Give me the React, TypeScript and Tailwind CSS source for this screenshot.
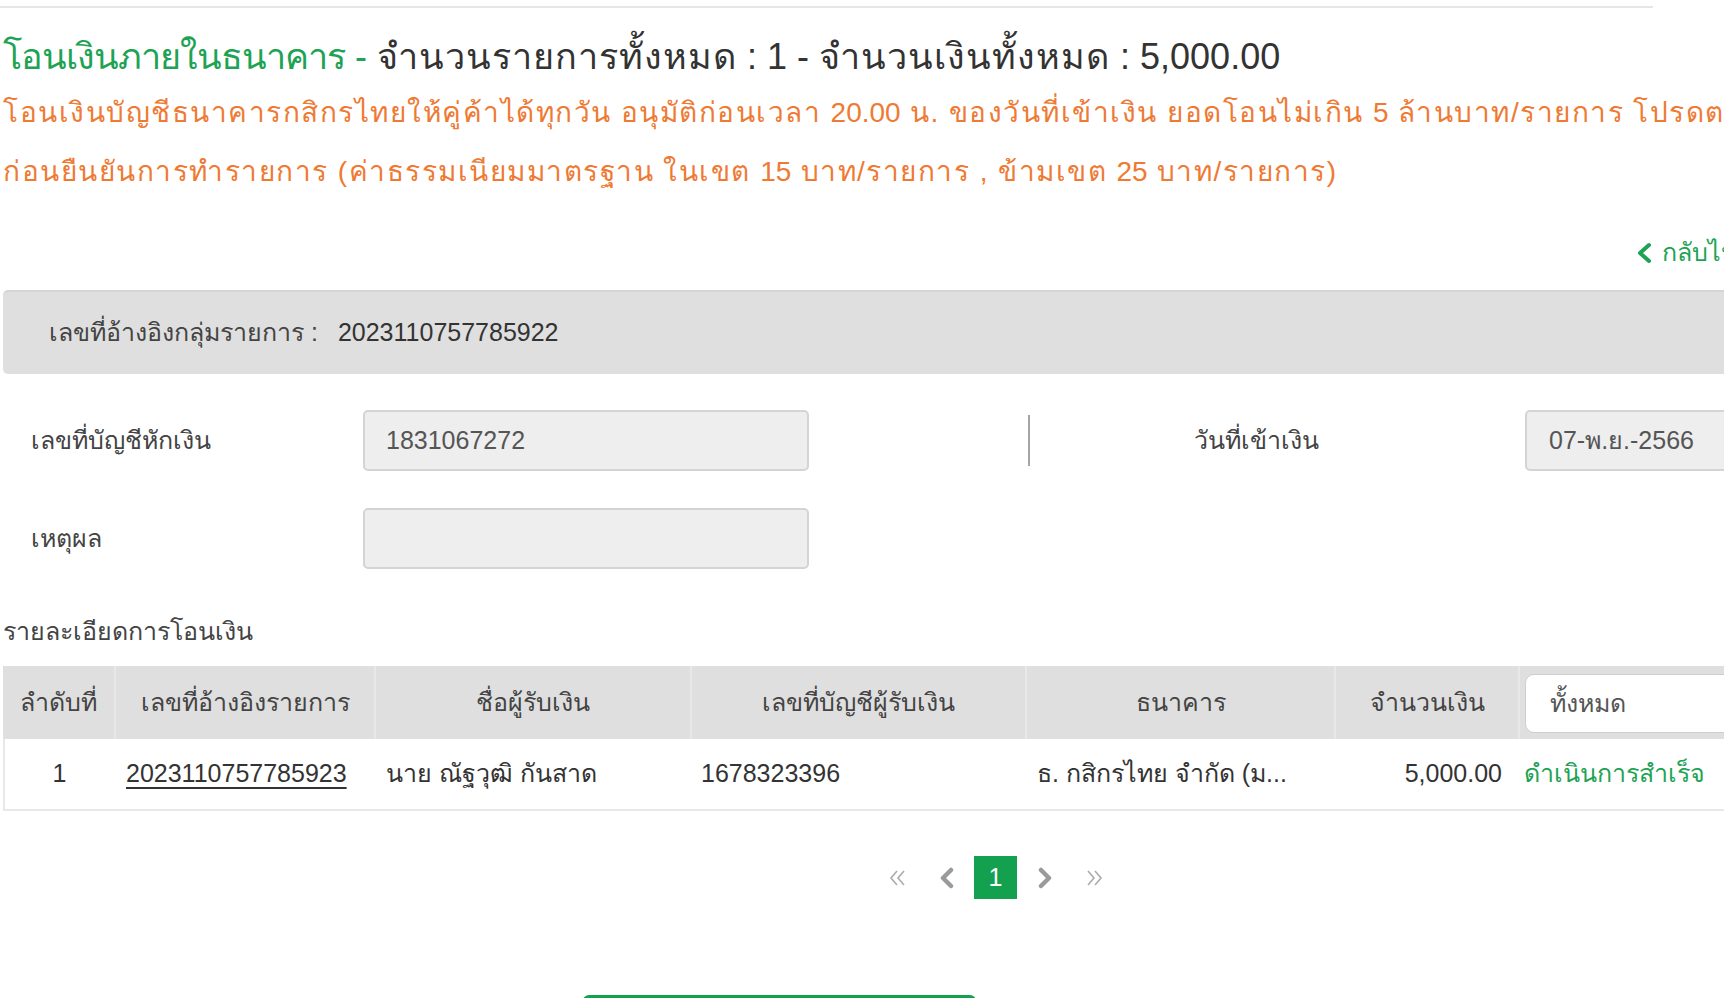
import React from "react";

const font = { fontFamily: '"Liberation Sans", "Noto Sans", Arial, sans-serif' };

function ChevronLeft() {
  return (
    <svg width="16" height="22" viewBox="0 0 16 22">
      <polyline points="12,3 4,11 12,19" fill="none" stroke="#9a9a9a" strokeWidth="4.5" strokeLinecap="round" strokeLinejoin="round" />
    </svg>
  );
}
function ChevronRight() {
  return (
    <svg width="16" height="22" viewBox="0 0 16 22">
      <polyline points="4,3 12,11 4,19" fill="none" stroke="#9a9a9a" strokeWidth="4.5" strokeLinecap="round" strokeLinejoin="round" />
    </svg>
  );
}
function DoubleLeft() {
  return (
    <svg width="20" height="22" viewBox="0 0 20 22">
      <polyline points="9,4 3,11 9,18" fill="none" stroke="#ababab" strokeWidth="1.6" />
      <polyline points="16,4 10,11 16,18" fill="none" stroke="#ababab" strokeWidth="1.6" />
    </svg>
  );
}
function DoubleRight() {
  return (
    <svg width="20" height="22" viewBox="0 0 20 22">
      <polyline points="4,4 10,11 4,18" fill="none" stroke="#ababab" strokeWidth="1.6" />
      <polyline points="11,4 17,11 11,18" fill="none" stroke="#ababab" strokeWidth="1.6" />
    </svg>
  );
}

function T({ children }: { children: React.ReactNode }) {
  return <span className="tracking-[1.5px]">{children}</span>;
}
function TT({ children }: { children: React.ReactNode }) {
  return <span className="tracking-[1px]">{children}</span>;
}

export default function App() {
  return (
    <div className="h-[998px] w-full overflow-hidden bg-white text-[#444]" style={font}>
      <div className="w-[1990px]">
        <div className="mt-[6px] h-[2px] w-[1653px] bg-[#e6e6e6]" />

        {/* Title */}
        <div className="mt-[25px] pl-[3px] text-[36px] leading-[48px] whitespace-nowrap text-[#333]">
          <span className="text-[#1ea355]">
            <span className="tracking-[-1px]">โอนเงินภายในธนาคาร</span> -{" "}
          </span>
          <TT>จำนวนรายการทั้งหมด</TT> : 1 - <TT>จำนวนเงินทั้งหมด</TT> : 5,000.00
        </div>

        {/* Notice */}
        <div className="mt-[2px] pl-[3px] text-[28px] leading-[59px] whitespace-nowrap text-[#ee7a34]">
          <div>
            <T>โอนเงินบัญชีธนาคารกสิกรไทยให้คู่ค้าได้ทุกวัน อนุมัติก่อนเวลา </T>20.00<T> น. ของวันที่เข้าเงิน ยอดโอนไม่เกิน </T>5<T> ล้านบาท/รายการ โปรดตรวจสอบข้อมูล</T>
          </div>
          <div>
            <T>ก่อนยืนยันการทำรายการ (ค่าธรรมเนียมมาตรฐาน ในเขต </T>15<T> บาท/รายการ , ข้ามเขต </T>25<T> บาท/รายการ)</T>
          </div>
        </div>

        {/* Back link */}
        <div className="mt-[34px] flex w-[1886px] justify-end">
          <div className="flex h-[36px] w-[250px] items-center gap-[10px] text-[25px] text-[#1ea355]">
            <svg width="16" height="22" viewBox="0 0 16 22">
              <polyline points="13,3 4,11 13,19" fill="none" stroke="#1ea355" strokeWidth="4" strokeLinejoin="round" strokeLinecap="round" />
            </svg>
            <span>กลับไปหน้าหลัก</span>
          </div>
        </div>

        {/* Group reference box */}
        <div className="ml-[3px] mt-[19px] flex h-[84px] w-[1960px] items-center rounded-[5px] border-t-2 border-[#d6d6d6] bg-[#dfdfdf] pl-[46px] text-[25px] text-[#333]">
          <span className="text-[#444]">เลขที่อ้างอิงกลุ่มรายการ :</span>
          <span className="ml-[20px]">2023110757785922</span>
        </div>

        {/* Row 1 */}
        <div className="mt-[36px] flex items-center pl-[31px] text-[25px]">
          <div className="w-[332px]">เลขที่บัญชีหักเงิน</div>
          <div className="flex h-[61px] w-[446px] items-center rounded-[5px] border-2 border-[#d4d4d4] bg-[#eeeeee] pl-[21px] text-[#555]">
            1831067272
          </div>
          <div className="ml-[219px] h-[51px] w-[2px] bg-[#a5a5a5]" />
          <div className="w-[452px] text-center">วันที่เข้าเงิน</div>
          <div className="ml-[43px] flex h-[61px] w-[320px] items-center rounded-[5px] border-2 border-[#d4d4d4] bg-[#eeeeee] pl-[22px] text-[#555]">
            07-พ.ย.-2566
          </div>
        </div>

        {/* Row 2 */}
        <div className="mt-[37px] flex items-center pl-[31px] text-[25px]">
          <div className="w-[332px]">เหตุผล</div>
          <div className="h-[61px] w-[446px] rounded-[5px] border-2 border-[#d4d4d4] bg-[#eeeeee]" />
        </div>

        {/* Section title */}
        <div className="mt-[44px] pl-[3px] text-[25px] leading-[36px]">รายละเอียดการโอนเงิน</div>

        {/* Table */}
        <div className="ml-[3px] mt-[17px] w-[1900px] text-[25px]">
          <div className="flex h-[73px] items-center bg-[#dfdfdf] text-[#444]">
            <div className="w-[111px] text-center">ลำดับที่</div>
            <div className="flex h-full w-[260px] items-center justify-center border-l-2 border-[#e8e8e8]">เลขที่อ้างอิงรายการ</div>
            <div className="flex h-full w-[316px] items-center justify-center border-l-2 border-[#e8e8e8]">ชื่อผู้รับเงิน</div>
            <div className="flex h-full w-[335px] items-center justify-center border-l-2 border-[#e8e8e8]">เลขที่บัญชีผู้รับเงิน</div>
            <div className="flex h-full w-[309px] items-center justify-center border-l-2 border-[#e8e8e8]">ธนาคาร</div>
            <div className="flex h-full w-[184px] items-center justify-center border-l-2 border-[#e8e8e8]">จำนวนเงิน</div>
            <div className="flex h-full flex-1 items-start border-l-2 border-[#e8e8e8] pl-[5px] pt-[8px]">
              <div className="flex h-[59px] w-[300px] items-center rounded-[9px] border border-[#cfcfcf] bg-white pl-[24px] text-[#555]">
                ทั้งหมด
              </div>
            </div>
          </div>
          <div className="flex h-[72px] items-center border-b-2 border-l-2 border-[#e8e8e8] text-[#333]">
            <div className="w-[109px] text-center">1</div>
            <div className="w-[260px] pl-[12px]">
              <span className="underline decoration-2 underline-offset-[5px]">2023110757785923</span>
            </div>
            <div className="w-[316px] pl-[12px]">นาย ณัฐวุฒิ กันสาด</div>
            <div className="w-[335px] pl-[11px]">1678323396</div>
            <div className="w-[309px] pl-[12px]">ธ. กสิกรไทย จำกัด (ม...</div>
            <div className="w-[184px] pr-[16px] text-right">5,000.00</div>
            <div className="pl-[6px] text-[#1ea355]">ดำเนินการสำเร็จ</div>
          </div>
        </div>

        {/* Pagination */}
        <div className="ml-[876px] mt-[45px] flex items-center gap-[6px]">
          <div className="flex h-[43px] w-[43px] items-center justify-center"><DoubleLeft /></div>
          <div className="flex h-[43px] w-[43px] items-center justify-center"><ChevronLeft /></div>
          <div className="flex h-[43px] w-[43px] items-center justify-center bg-[#13a150] text-[25px] text-white">1</div>
          <div className="flex h-[43px] w-[43px] items-center justify-center"><ChevronRight /></div>
          <div className="flex h-[43px] w-[43px] items-center justify-center"><DoubleRight /></div>
        </div>

        {/* Bottom button */}
        <div className="ml-[583px] mt-[96px] h-[50px] w-[393px] rounded-[6px] bg-[#13a150]" />
      </div>
    </div>
  );
}
